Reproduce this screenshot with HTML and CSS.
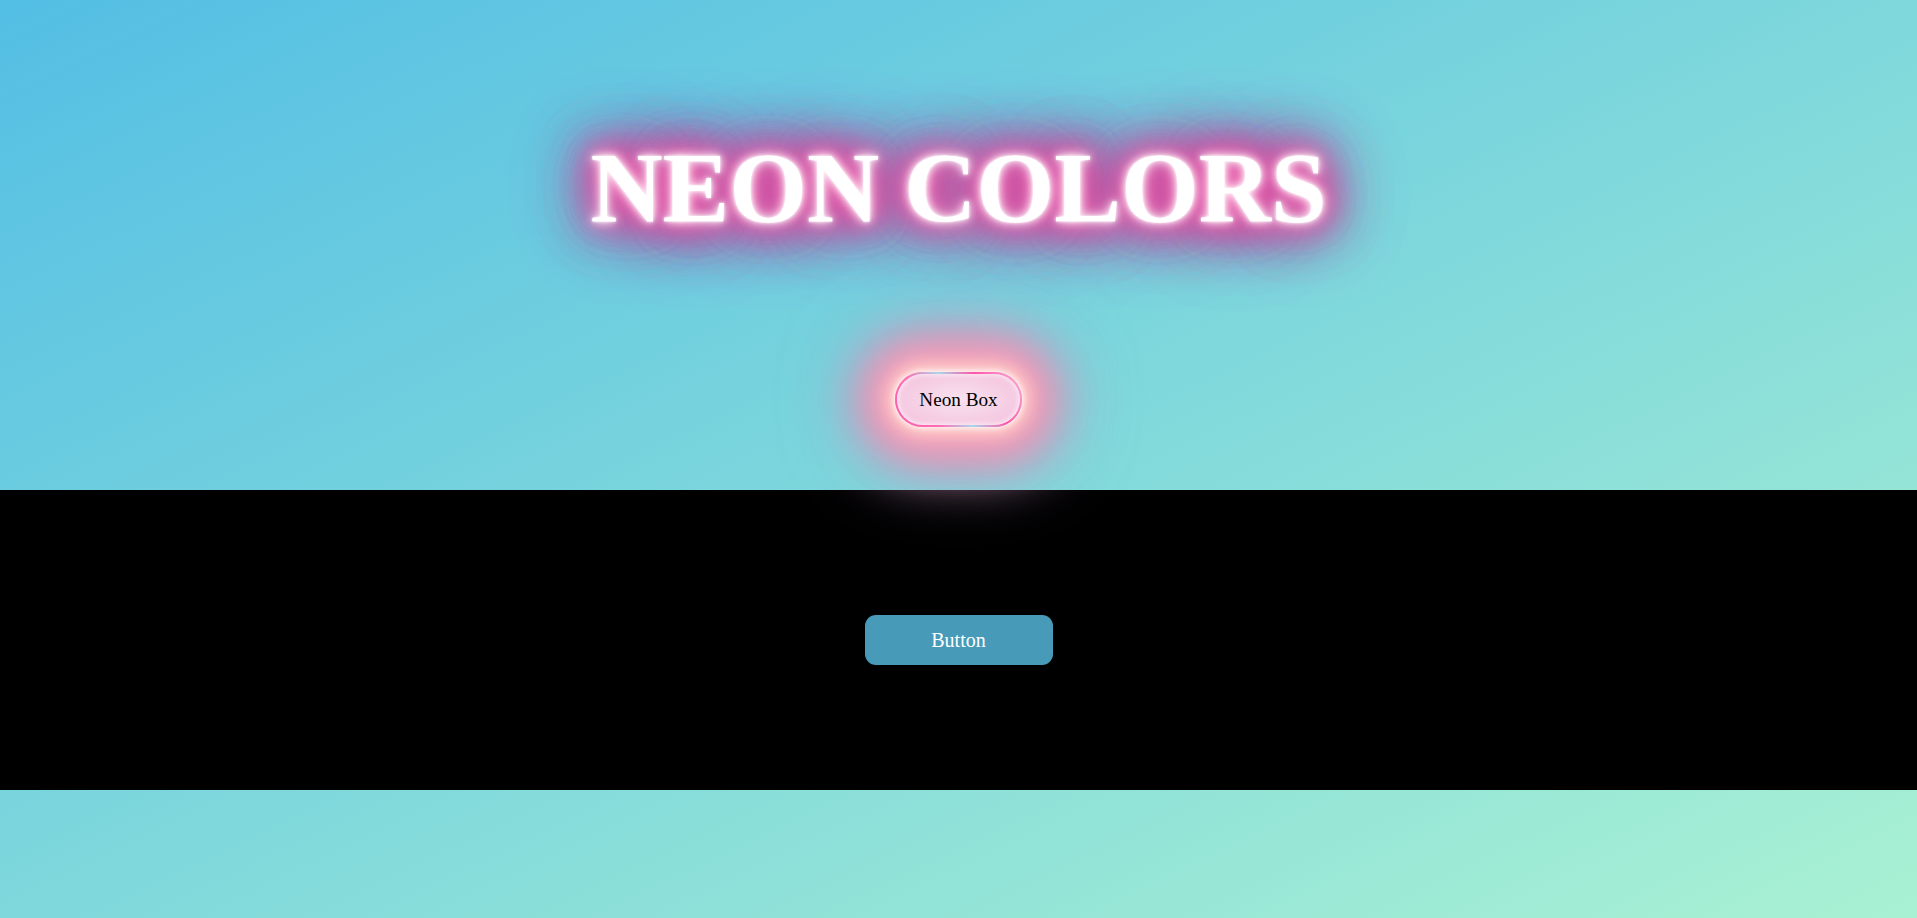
FILE: index.html
```html
<!DOCTYPE html>
<html lang="en">
<head>
<meta charset="utf-8">
<title>Neon Colors</title>
<link rel="stylesheet" href="styles.css">
</head>
<body>
  <section class="hero">
    <h1 class="neon-title">NEON COLORS</h1>
    <div class="neon-box">Neon Box</div>
  </section>
  <section class="band">
    <button class="btn" type="button">Button</button>
  </section>
</body>
</html>
```

FILE: styles.css
```css
html {
  min-height: 100%;
  background: linear-gradient(to bottom right, #53bee4, #a9f1d3);
}
body {
  margin: 0;
  min-height: 100vh;
  font-family: "Liberation Serif", "Times New Roman", serif;
}
.hero {
  height: 490px;
  box-sizing: border-box;
  padding-top: 132px;
  display: flex;
  flex-direction: column;
  align-items: center;
}
.neon-title {
  margin: 0;
  font-size: 100px;
  line-height: 111px;
  font-weight: bold;
  color: #fff;
  text-shadow:
    0 0 3px #fff,
    0 0 8px #fff,
    0 0 14px #ffc8e4,
    0 0 22px #f573b6,
    0 0 32px #e04fa2,
    0 0 42px #d4489f,
    0 0 42px #d4489f,
    0 0 54px #c84c9f,
    0 0 54px #c84c9f,
    0 0 66px #b8559f,
    0 0 66px #b8559f,
    0 0 80px #9c6cb4,
    0 0 96px #8a84c4;
}
.neon-box {
  margin-top: 129px;
  box-sizing: border-box;
  width: 127px;
  height: 55px;
  display: flex;
  align-items: center;
  justify-content: center;
  font-size: 19.2px;
  color: #000;
  border-radius: 28px;
  border: 2px solid transparent;
  background:
    radial-gradient(ellipse at center, #f9e2ef 0%, #f5cbe2 65%, #f3bcd9 100%) padding-box,
    linear-gradient(57deg, #ff5aab 0%, #ff6fb6 28%, #a9d6ee 48%, #ff55a8 70%, #fbb3d8 100%) border-box;
  box-shadow:
    inset 0 0 6px #fff,
    0 0 6px 1px #fff,
    0 0 16px 8px #ffd0c8,
    0 0 30px 18px #f7a4bc,
    0 0 44px 28px #e996b6,
    0 0 56px 36px rgba(212, 146, 188, 0.8),
    0 0 70px 42px rgba(184, 164, 210, 0.55);
}
.band {
  height: 300px;
  background: #000;
  display: flex;
  align-items: center;
  justify-content: center;
}
.btn {
  width: 188px;
  height: 50px;
  border: none;
  border-radius: 11px;
  background: #479bb9;
  color: #fff;
  font-family: "Liberation Serif", "Times New Roman", serif;
  font-size: 20px;
  cursor: pointer;
}
```
